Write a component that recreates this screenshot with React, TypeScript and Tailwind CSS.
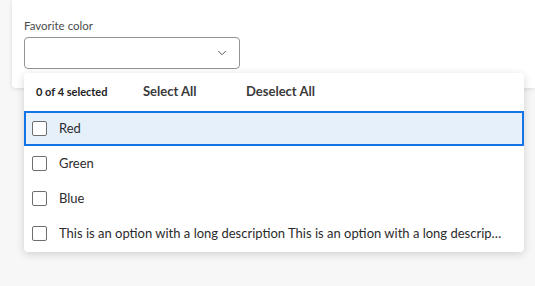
import { ChevronDown } from 'lucide-react';

const options = [
  'Red',
  'Green',
  'Blue',
  'This is an option with a long description This is an option with a long description This is an option with a long description',
];

export default function App() {
  return (
    <div
      className="relative h-[286px] w-[535px] overflow-hidden bg-[#f7f7f7] pl-3"
      style={{ fontFamily: 'Lato, "Open Sans", sans-serif' }}
    >
      {/* Card */}
      <div className="h-[88px] rounded-bl-[4px] bg-white px-3 pt-[18px] shadow-[0_1px_4px_rgba(0,0,0,0.12)]">
        <label className="block text-[11.5px] leading-[15px] text-[#4b4b4b]">Favorite color</label>
        <button className="mt-[4px] flex h-[32px] w-[216px] items-center justify-end rounded-[4px] border border-[#949494] bg-white pr-[10px]">
          <ChevronDown className="h-[14px] w-[14px] text-[#505050]" strokeWidth={1.6} />
        </button>
      </div>

      {/* Popover */}
      <div className="absolute left-[24px] top-[73px] w-[500px] overflow-hidden rounded-[4px] bg-white pb-[1px] shadow-[0_2px_8px_rgba(0,0,0,0.16)]">
        <div className="flex h-[38px] items-center pl-[12px] text-[#222]">
          <span className="w-[107px] text-[11px] font-bold">0 of 4 selected</span>
          <span className="w-[103px] text-[13px] font-bold text-[#3a3a3a]">Select All</span>
          <span className="text-[13px] font-bold text-[#3a3a3a]">Deselect All</span>
        </div>
        {options.map((opt, i) => (
          <div
            key={opt}
            className={
              i === 0
                ? 'flex h-[35px] items-center border-2 border-[#1473e6] bg-[#e6f0fb] pl-[6px] pr-[16px]'
                : 'flex h-[35px] items-center pl-[8px] pr-[18px]'
            }
          >
            <span className="h-[15px] w-[15px] shrink-0 rounded-[2px] border-[1.5px] border-[#6e6e6e] bg-white" />
            <span className="ml-[12px] truncate text-[13px] text-[#2c2c2c]">{opt}</span>
          </div>
        ))}
      </div>
    </div>
  );
}
